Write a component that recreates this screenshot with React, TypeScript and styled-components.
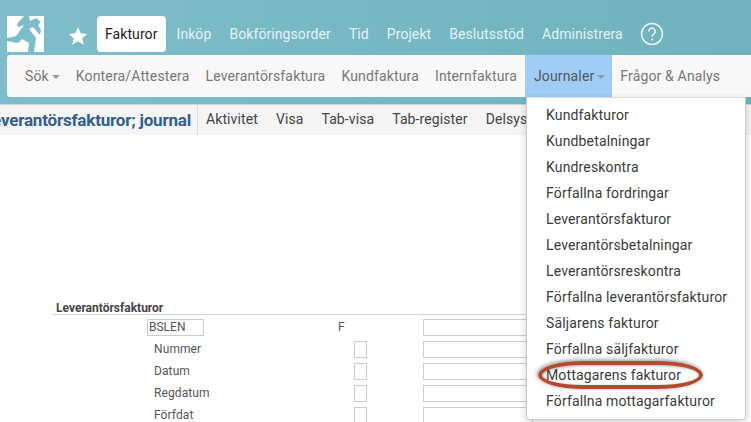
import React from "react";
import styled, { createGlobalStyle } from "styled-components";

const GlobalStyle = createGlobalStyle`
  html, body {
    margin: 0;
    padding: 0;
    background: #fff;
  }
  body {
    width: 751px;
    height: 422px;
    overflow: hidden;
    font-family: Roboto, "Liberation Sans", sans-serif;
  }
`;

const Page = styled.div`
  position: relative;
  width: 751px;
  height: 422px;
  overflow: hidden;
`;

const Header = styled.header`
  height: 105px;
  box-sizing: border-box;
  padding: 16px 0 0 7px;
  background: linear-gradient(90deg, #7fbdca 0%, #6fb2bd 100%);
  border-bottom: 1px solid #c9d6d8;
`;

const TopRow = styled.nav`
  display: flex;
  align-items: center;
  height: 36px;
`;

const Logo = styled.svg`
  width: 37px;
  height: 36px;
  flex-shrink: 0;
`;

const Star = styled.svg`
  width: 20px;
  height: 20px;
  margin: 3px 9px 0 24px;
  flex-shrink: 0;
`;

const TopLink = styled.a<{ $active?: boolean }>`
  display: flex;
  align-items: center;
  height: 36px;
  padding: 0 ${(p) => (p.$active ? "8px" : "9px")};
  margin-right: ${(p) => (p.$active ? "2px" : "0")};
  font-size: 14px;
  letter-spacing: 0.08px;
  border-radius: 4px;
  color: ${(p) => (p.$active ? "#1c1c1c" : "#e3f3f5")};
  background: ${(p) => (p.$active ? "#fff" : "transparent")};
`;

const Help = styled.svg`
  width: 24px;
  height: 24px;
  margin-left: 8px;
`;

const SubNav = styled.nav`
  display: flex;
  align-items: stretch;
  height: 42px;
  margin-top: 3px;
  padding-left: 10px;
  background: #f8f8f8;
  border-radius: 3px 0 0 3px;
`;

const SubLink = styled.a<{ $open?: boolean }>`
  display: flex;
  align-items: center;
  padding: 0 ${(p) => (p.$open ? "7px 0 9px" : "8px")};
  font-size: 14px;
  letter-spacing: 0.15px;
  color: ${(p) => (p.$open ? "#555" : "#777")};
  background: ${(p) => (p.$open ? "#9fcdf6" : "transparent")};
`;

const Caret = styled.span`
  width: 0;
  height: 0;
  margin: 2px 0 0 3px;
  border-left: 4px solid transparent;
  border-right: 4px solid transparent;
  border-top: 4px solid #9a9a9a;
`;

const ToolBar = styled.div`
  display: flex;
  align-items: stretch;
  height: 30px;
  background: #f5f5f5;
`;

const TitleClip = styled.div`
  display: flex;
  justify-content: flex-end;
  align-items: center;
  width: 191px;
  padding-right: 6px;
  border-right: 1px solid #ddd;
  overflow: hidden;
  flex-shrink: 0;
`;

const PageTitle = styled.h1`
  margin: 0;
  font-size: 17px;
  font-weight: 700;
  color: #2f5f93;
  white-space: nowrap;
  letter-spacing: -0.2px;
`;

const ToolLinks = styled.div`
  display: flex;
  align-items: center;
  gap: 18px;
  padding: 0 0 3px 8px;
  font-size: 14px;
  letter-spacing: 0.1px;
  color: #444;
`;

const Content = styled.main`
  padding: 164px 0 0 52px;
`;

const SectionTitle = styled.div`
  width: 480px;
  box-sizing: border-box;
  height: 16px;
  padding-left: 4px;
  font-size: 12px;
  line-height: 18px;
  font-weight: 700;
  color: #444;
  border-bottom: 1px solid #d8d5c8;
`;

const FormGrid = styled.div`
  display: grid;
  grid-template-columns: 191px 85px 110px;
  grid-auto-rows: 22px;
  margin: 4px 0 0 95px;
`;

const Label = styled.div`
  padding-left: 7px;
  font-size: 12px;
  line-height: 17px;
  letter-spacing: 0.1px;
  color: #555;
`;

const CodeBox = styled.div`
  width: 57px;
  height: 17px;
  box-sizing: border-box;
  padding-left: 1px;
  font-size: 12px;
  line-height: 15px;
  color: #555;
  border: 1px solid #ccc;
`;

const Flag = styled.div`
  font-size: 12px;
  line-height: 17px;
  color: #555;
`;

const Check = styled.div`
  width: 13px;
  height: 17px;
  box-sizing: border-box;
  margin-left: 16px;
  border: 1px solid #ccc;
`;

const WideInput = styled.div`
  height: 17px;
  box-sizing: border-box;
  border: 1px solid #ccc;
`;

const Dropdown = styled.ul`
  position: absolute;
  left: 526px;
  top: 97px;
  width: 220px;
  height: 323px;
  box-sizing: border-box;
  margin: 0;
  padding: 4px 0 0;
  list-style: none;
  background: #fff;
  border: 1px solid #ccc;
  border-top-color: #ddd;
  border-radius: 0 0 4px 4px;
  box-shadow: 0 3px 8px rgba(0, 0, 0, 0.18);
`;

const DropItem = styled.li`
  position: relative;
  height: 26px;
  padding-left: 19px;
  font-size: 14px;
  line-height: 26px;
  letter-spacing: 0.15px;
  color: #3a3a3a;
  white-space: nowrap;
`;

const Ring = styled.span`
  position: absolute;
  left: 11px;
  top: -1px;
  width: 165px;
  height: 28px;
  box-sizing: border-box;
  border: 4px solid #b5492f;
  border-radius: 45px / 14px;
  box-shadow: -1px -1px 4px rgba(60, 60, 60, 0.6), inset 1px 1px 3px rgba(60, 60, 60, 0.4);
  pointer-events: none;
`;

const topLinks = ["Inköp", "Bokföringsorder", "Tid", "Projekt", "Beslutsstöd", "Administrera"];
const toolLinks = ["Aktivitet", "Visa", "Tab-visa", "Tab-register", "Delsys"];
const menuItems = [
  "Kundfakturor",
  "Kundbetalningar",
  "Kundreskontra",
  "Förfallna fordringar",
  "Leverantörsfakturor",
  "Leverantörsbetalningar",
  "Leverantörsreskontra",
  "Förfallna leverantörsfakturor",
  "Säljarens fakturor",
  "Förfallna säljfakturor",
  "Mottagarens fakturor",
  "Förfallna mottagarfakturor",
];
const fieldRows = ["Nummer", "Datum", "Regdatum", "Förfdat"];

export default function App() {
  return (
    <Page>
      <GlobalStyle />
      <Header>
        <TopRow>
          <Logo viewBox="0 0 37 36">
            <rect fill="#fff" width="37" height="36" />
            <path
              fill="#7dbcc9"
              d="M17 0H22L23 5 29 2 34 6 31 9 34 14 33 19 26 11 22 13 29 22 27 36H21L22 27 15 23 11 27 0 25V22L9 20 17 9 11 11 10 8Z"
            />
          </Logo>
          <Star viewBox="0 0 24 24">
            <path fill="#fff" d="M12 1.5l3.2 7.3 7.8.7-5.9 5.2 1.8 7.8L12 18.4l-6.9 4.1 1.8-7.8L1 9.5l7.8-.7z" />
          </Star>
          <TopLink $active>Fakturor</TopLink>
          {topLinks.map((l) => (
            <TopLink key={l}>{l}</TopLink>
          ))}
          <Help viewBox="0 0 24 24" fill="none">
            <circle cx="12" cy="12" r="10.4" stroke="#e8f5f6" strokeWidth="1.5" />
            <path
              d="M8.8 9.4a3.2 3.2 0 1 1 4.9 2.7c-1.1.7-1.7 1.3-1.7 2.6"
              stroke="#e8f5f6"
              strokeWidth="1.6"
            />
            <circle cx="12" cy="17.6" r="1.1" fill="#e8f5f6" />
          </Help>
        </TopRow>
        <SubNav>
          <SubLink>
            Sök<Caret />
          </SubLink>
          <SubLink>Kontera/Attestera</SubLink>
          <SubLink>Leverantörsfaktura</SubLink>
          <SubLink>Kundfaktura</SubLink>
          <SubLink>Internfaktura</SubLink>
          <SubLink $open>
            Journaler<Caret />
          </SubLink>
          <SubLink>Frågor &amp; Analys</SubLink>
        </SubNav>
      </Header>
      <ToolBar>
        <TitleClip>
          <PageTitle>Leverantörsfakturor; journal</PageTitle>
        </TitleClip>
        <ToolLinks>
          {toolLinks.map((l) => (
            <span key={l}>{l}</span>
          ))}
        </ToolLinks>
      </ToolBar>
      <Content>
        <SectionTitle>Leverantörsfakturor</SectionTitle>
        <FormGrid>
          <CodeBox>BSLEN</CodeBox>
          <Flag>F</Flag>
          <WideInput />
          {fieldRows.map((f) => (
            <React.Fragment key={f}>
              <Label>{f}</Label>
              <Check />
              <WideInput />
            </React.Fragment>
          ))}
        </FormGrid>
      </Content>
      <Dropdown>
        {menuItems.map((m) => (
          <DropItem key={m}>
            {m}
            {m === "Mottagarens fakturor" && <Ring />}
          </DropItem>
        ))}
      </Dropdown>
    </Page>
  );
}
